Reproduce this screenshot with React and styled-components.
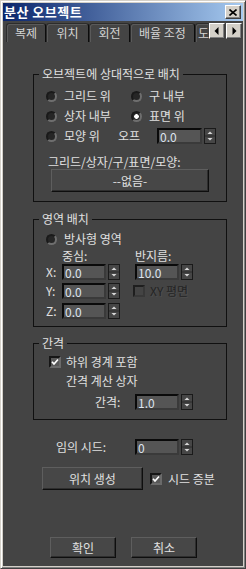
import React from 'react';
import styled, { createGlobalStyle } from 'styled-components';

const GlobalStyle = createGlobalStyle`
  html, body {
    margin: 0;
    padding: 0;
    background: #444444;
  }
  body {
    font-family: "Noto Sans CJK KR", "Noto Sans", sans-serif;
    font-size: 12px;
  }
`;

/* ---------- window frame ---------- */
const Window = styled.div`
  box-sizing: border-box;
  width: 246px;
  height: 569px;
  display: flex;
  flex-direction: column;
  padding: 2px;
  background: #d4d0c8;
  border: 1px solid;
  border-color: #d4d0c8 #404040 #404040 #d4d0c8;
  box-shadow: inset 1px 1px #ffffff, inset -1px -1px #808080;
`;

const TitleBar = styled.div`
  height: 18px;
  flex-shrink: 0;
  display: flex;
  align-items: center;
  justify-content: space-between;
  padding: 0 2px 0 1px;
  background: linear-gradient(to right, #0a246a, #a6caf0);
`;

const Title = styled.span`
  color: #ffffff;
  font-weight: bold;
  font-size: 13px;
  line-height: 14px;
  letter-spacing: 0.5px;
`;

const SysButton = styled.div`
  box-sizing: border-box;
  width: 16px;
  height: ${(p) => p.$h || 14}px;
  display: flex;
  align-items: center;
  justify-content: center;
  background: #d4d0c8;
  border: 1px solid;
  border-color: #ffffff #404040 #404040 #ffffff;
  box-shadow: inset -1px -1px #808080;
`;

/* ---------- body / tabs ---------- */
const Body = styled.div`
  flex: 1;
  display: flex;
  flex-direction: column;
  background: #444444;
  color: #e0e0e0;
  font-size: 12px;
  line-height: 14px;
`;

const TabRow = styled.div`
  display: flex;
  height: 19px;
  margin-top: 2px;
  padding: 0 1px 0 3px;
`;

const TabList = styled.div`
  flex: 1;
  display: flex;
  overflow: hidden;
`;

const Tab = styled.div`
  box-sizing: border-box;
  flex-shrink: 0;
  width: ${(p) => p.$w}px;
  height: 19px;
  padding-top: 2px;
  border: 1px solid #2c2c2c;
  border-right-color: ${(p) => (p.$cut ? 'transparent' : '#0c0c0c')};
  border-bottom: none;
  border-radius: ${(p) => (p.$cut ? '3px 0 0 0' : '3px 3px 0 0')};
  box-shadow: inset 1px 1px #5a5a5a;
  color: #d4d4d4;
  text-align: ${(p) => (p.$cut ? 'left' : 'center')};
  padding-left: ${(p) => (p.$cut ? 2 : 0)}px;
  white-space: nowrap;
`;

const ScrollArrows = styled.div`
  display: flex;
  gap: 1px;
  align-self: flex-start;
`;

/* ---------- panel ---------- */
const Panel = styled.div`
  display: flex;
  flex-direction: column;
  align-items: flex-start;
  padding-left: 30px;
`;

const Group = styled.fieldset`
  box-sizing: border-box;
  width: 194px;
  margin: ${(p) => p.$top}px 0 0 0;
  padding: 0;
  border: 1px solid #101010;
  min-inline-size: 0;
`;

const Legend = styled.legend`
  margin-left: 5px;
  padding: 0 3px;
  line-height: 14px;
  color: #e0e0e0;
`;

const GroupBody = styled.div`
  display: flex;
  flex-direction: column;
  align-items: flex-start;
  padding: ${(p) => p.$pad};
`;

const RadioGrid = styled.div`
  display: grid;
  grid-template-columns: 85px auto;
  grid-auto-rows: 20px;
  align-items: center;
  padding-left: 12px;
`;

const Row = styled.div`
  display: flex;
  align-items: center;
  height: ${(p) => p.$h || 20}px;
  margin-top: ${(p) => p.$mt || 0}px;
  padding-left: ${(p) => p.$pl || 0}px;
  gap: ${(p) => p.$gap || 0}px;
`;

const Label = styled.span`
  display: inline-block;
  width: ${(p) => (p.$w ? `${p.$w}px` : 'auto')};
  flex-shrink: 0;
  white-space: nowrap;
  color: ${(p) => (p.$disabled ? '#242424' : '#e0e0e0')};
  text-shadow: ${(p) => (p.$disabled ? '1px 1px #4e4e4e' : 'none')};
  margin-left: ${(p) => p.$ml || 0}px;
  margin-top: ${(p) => p.$mt || 0}px;
`;

const RadioLabel = styled.label`
  display: flex;
  align-items: center;
  gap: 7px;
  width: ${(p) => (p.$w ? `${p.$w}px` : 'auto')};
  flex-shrink: 0;
  white-space: nowrap;
`;

const RadioDot = styled.span`
  box-sizing: border-box;
  width: 11px;
  height: 11px;
  border-radius: 50%;
  border: 2px solid;
  border-color: #1a1a1a #6e6e6e #6e6e6e #1a1a1a;
  background: ${(p) =>
    p.$on ? 'radial-gradient(circle, #ffffff 0 2px, #2a2a2a 2.6px)' : '#262626'};
`;

const CheckBox = styled.span`
  box-sizing: border-box;
  width: 12px;
  height: 12px;
  flex-shrink: 0;
  display: flex;
  align-items: center;
  justify-content: center;
  border: 2px solid;
  border-color: ${(p) =>
    p.$disabled ? '#1e1e1e #383838 #383838 #1e1e1e' : '#161616 #6a6a6a #6a6a6a #161616'};
  background: ${(p) => (p.$disabled ? '#444444' : '#585858')};
  margin-left: ${(p) => p.$ml || 0}px;
`;

const AreaGrid = styled.div`
  display: grid;
  grid-template-columns: 16px 73px auto;
  grid-template-rows: 15px 19px 20px 16px;
  align-items: start;
`;

const Cell = styled.div`
  display: flex;
  align-items: center;
  height: ${(p) => p.$h || 16}px;
  gap: 5px;
`;

const SpinnerWrap = styled.div`
  display: flex;
  gap: 2px;
  flex-shrink: 0;
`;

const SpinField = styled.input`
  box-sizing: border-box;
  width: ${(p) => p.$w}px;
  height: 16px;
  margin: 0;
  padding: 0 0 0 1px;
  border: 2px solid;
  border-color: #0a0a0a #3a3a3a #3a3a3a #0a0a0a;
  background: #555555;
  color: #dde4f0;
  font: inherit;
  line-height: 12px;
  outline: none;
`;

const PushButton = styled.button`
  box-sizing: border-box;
  flex-shrink: 0;
  width: ${(p) => p.$w}px;
  height: ${(p) => p.$h}px;
  margin: 0 0 0 ${(p) => p.$ml || 0}px;
  padding: 0;
  background: #474747;
  color: #e0e0e0;
  font: inherit;
  line-height: 14px;
  border: 1px solid;
  border-color: #5e5e5e #0e0e0e #0e0e0e #5e5e5e;
  box-shadow: inset -1px -1px #2e2e2e;
`;

/* ---------- small drawings ---------- */
const SpinArrows = () => (
  <svg width="12" height="16" viewBox="0 0 12 16">
    <rect x="0.5" y="0.5" width="11" height="15" fill="#464646" stroke="#1a1a1a" />
    <line x1="1" y1="8" x2="11" y2="8" stroke="#2a2a2a" />
    <path d="M6 3.5 L8.5 6 L3.5 6 Z" fill="#d8d8d8" />
    <path d="M3.5 10 L8.5 10 L6 12.5 Z" fill="#d8d8d8" />
  </svg>
);

const Check = () => (
  <svg width="8" height="8" viewBox="0 0 8 8">
    <path d="M1 3.8 L3 6 L7 1.5" fill="none" stroke="#ffffff" strokeWidth="1.7" />
  </svg>
);

const CloseGlyph = () => (
  <svg width="8" height="7" viewBox="0 0 8 7">
    <path d="M0.5 0.5 L7.5 6.5 M7.5 0.5 L0.5 6.5" stroke="#000" strokeWidth="1.6" />
  </svg>
);

const Arrow = ({ dir }) => (
  <svg width="6" height="8" viewBox="0 0 6 8">
    <path d={dir === 'left' ? 'M4.5 0 L4.5 8 L0.5 4 Z' : 'M1.5 0 L1.5 8 L5.5 4 Z'} fill="#000" />
  </svg>
);

const Spinner = ({ value, w = 44 }) => (
  <SpinnerWrap>
    <SpinField $w={w} readOnly value={value} />
    <SpinArrows />
  </SpinnerWrap>
);

const Radio = ({ children, on, w }) => (
  <RadioLabel $w={w}>
    <RadioDot $on={on} />
    {children}
  </RadioLabel>
);

export default function App() {
  return (
    <>
      <GlobalStyle />
      <Window>
        <TitleBar>
          <Title>분산 오브젝트</Title>
          <SysButton>
            <CloseGlyph />
          </SysButton>
        </TitleBar>

        <Body>
          <TabRow>
            <TabList>
              <Tab $w={40}>복제</Tab>
              <Tab $w={43}>위치</Tab>
              <Tab $w={41}>회전</Tab>
              <Tab $w={65}>배율 조정</Tab>
              <Tab $w={14} $cut>도</Tab>
            </TabList>
            <ScrollArrows>
              <SysButton $h={16}>
                <Arrow dir="left" />
              </SysButton>
              <SysButton $h={16}>
                <Arrow dir="right" />
              </SysButton>
            </ScrollArrows>
          </TabRow>

          <Panel>
            {/* 오브젝트에 상대적으로 배치 */}
            <Group $top={25}>
              <Legend>오브젝트에 상대적으로 배치</Legend>
              <GroupBody $pad="5px 0 9px 0">
                <RadioGrid>
                  <Radio>그리드 위</Radio>
                  <Radio>구 내부</Radio>
                  <Radio>상자 내부</Radio>
                  <Radio on>표면 위</Radio>
                </RadioGrid>
                <Row $pl={12}>
                  <Radio w={72}>모양 위</Radio>
                  <Label $w={39}>오프</Label>
                  <Spinner value="0.0" w={45} />
                </Row>
                <Label $ml={14} $mt={9}>그리드/상자/구/표면/모양:</Label>
                <PushButton $w={158} $h={23} $ml={17}>--없음-</PushButton>
              </GroupBody>
            </Group>

            {/* 영역 배치 */}
            <Group $top={10}>
              <Legend>영역 배치</Legend>
              <GroupBody $pad="3px 0 7px 12px">
                <Row>
                  <Radio>방사형 영역</Radio>
                </Row>
                <AreaGrid>
                  <span />
                  <Cell $h={14}>중심:</Cell>
                  <Cell $h={14}>반지름:</Cell>

                  <Cell>X:</Cell>
                  <Cell>
                    <Spinner value="0.0" />
                  </Cell>
                  <Cell>
                    <Spinner value="10.0" />
                  </Cell>

                  <Cell>Y:</Cell>
                  <Cell>
                    <Spinner value="0.0" />
                  </Cell>
                  <Cell>
                    <CheckBox $disabled $ml={-2} />
                    <Label $disabled>XY 평면</Label>
                  </Cell>

                  <Cell>Z:</Cell>
                  <Cell>
                    <Spinner value="0.0" />
                  </Cell>
                  <span />
                </AreaGrid>
              </GroupBody>
            </Group>

            {/* 간격 */}
            <Group $top={9}>
              <Legend>간격</Legend>
              <GroupBody $pad="5px 0 9px 0">
                <Row $h={14} $pl={15} $gap={5}>
                  <CheckBox>
                    <Check />
                  </CheckBox>
                  <Label>하위 경계 포함</Label>
                </Row>
                <Label $ml={32} $mt={5}>간격 계산 상자</Label>
                <Row $h={16} $mt={6} $pl={61}>
                  <Label $w={40}>간격:</Label>
                  <Spinner value="1.0" />
                </Row>
              </GroupBody>
            </Group>

            <Row $h={16} $mt={19} $pl={23}>
              <Label $w={79}>임의 시드:</Label>
              <Spinner value="0" />
            </Row>

            <Row $h={23} $mt={12} $pl={9}>
              <PushButton $w={101} $h={23}>위치 생성</PushButton>
              <CheckBox $ml={7}>
                <Check />
              </CheckBox>
              <Label $ml={6}>시드 증분</Label>
            </Row>

            <Row $h={21} $mt={47} $pl={17} $gap={15}>
              <PushButton $w={66} $h={21}>확인</PushButton>
              <PushButton $w={66} $h={21}>취소</PushButton>
            </Row>
          </Panel>
        </Body>
      </Window>
    </>
  );
}
